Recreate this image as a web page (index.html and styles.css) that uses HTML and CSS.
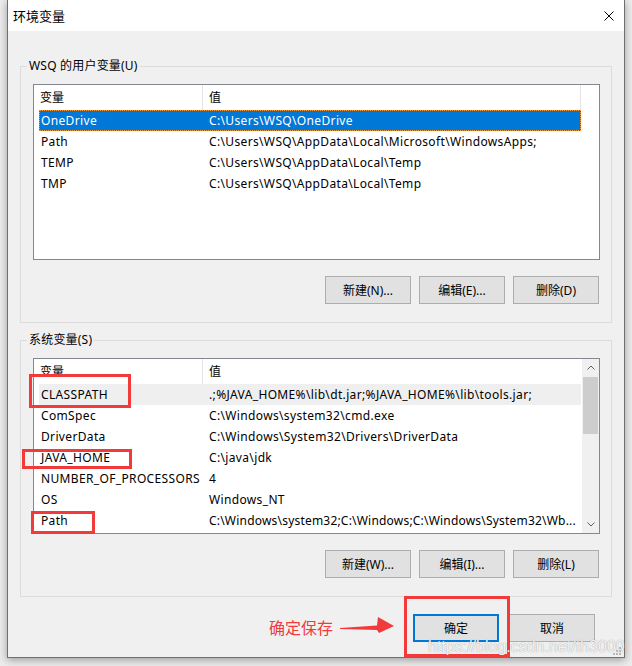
FILE: index.html
```html
<!DOCTYPE html>
<html lang="zh-CN">
<head>
    <meta charset="UTF-8">
    <title>环境变量</title>
    <link rel="stylesheet" href="styles.css">
</head>
<body>
    <div class="window">
        <div class="titlebar">
            <span class="title">环境变量</span>
            <svg class="close" width="10" height="10" viewBox="0 0 10 10">
                <path d="M0.5 0.5 L9.5 9.5 M9.5 0.5 L0.5 9.5" stroke="#000" stroke-width="1" fill="none"/>
            </svg>
        </div>

        <div class="content">
            <div class="group">
                <span class="legend">WSQ 的用户变量(U)</span>
                <div class="list list-user">
                    <div class="list-main">
                        <div class="list-head">
                            <div class="head-name">变量</div>
                            <div class="head-value">值</div>
                            <div class="head-rest"></div>
                        </div>
                        <div class="row selected"><span>OneDrive</span><span>C:\Users\WSQ\OneDrive</span></div>
                        <div class="row"><span>Path</span><span>C:\Users\WSQ\AppData\Local\Microsoft\WindowsApps;</span></div>
                        <div class="row"><span>TEMP</span><span>C:\Users\WSQ\AppData\Local\Temp</span></div>
                        <div class="row"><span>TMP</span><span>C:\Users\WSQ\AppData\Local\Temp</span></div>
                    </div>
                </div>
                <div class="buttons">
                    <button>新建(N)...</button>
                    <button>编辑(E)...</button>
                    <button>删除(D)</button>
                </div>
            </div>

            <div class="group">
                <span class="legend">系统变量(S)</span>
                <div class="list">
                    <div class="list-main">
                        <div class="list-head">
                            <div class="head-name">变量</div>
                            <div class="head-value head-last">值</div>
                        </div>
                        <div class="row soft"><span>CLASSPATH</span><span>.;%JAVA_HOME%\lib\dt.jar;%JAVA_HOME%\lib\tools.jar;</span></div>
                        <div class="row"><span>ComSpec</span><span>C:\Windows\system32\cmd.exe</span></div>
                        <div class="row"><span>DriverData</span><span>C:\Windows\System32\Drivers\DriverData</span></div>
                        <div class="row"><span>JAVA_HOME</span><span>C:\java\jdk</span></div>
                        <div class="row"><span>NUMBER_OF_PROCESSORS</span><span>4</span></div>
                        <div class="row"><span>OS</span><span>Windows_NT</span></div>
                        <div class="row"><span>Path</span><span class="tight">C:\Windows\system32;C:\Windows;C:\Windows\System32\Wb...</span></div>
                    </div>
                    <div class="scrollbar">
                        <div class="sb-btn">
                            <svg width="8" height="5" viewBox="0 0 8 5"><polyline points="0.5,4.5 4,1 7.5,4.5" fill="none" stroke="#606060"/></svg>
                        </div>
                        <div class="sb-thumb"></div>
                        <div class="sb-track"></div>
                        <div class="sb-btn">
                            <svg width="8" height="5" viewBox="0 0 8 5"><polyline points="0.5,0.5 4,4 7.5,0.5" fill="none" stroke="#606060"/></svg>
                        </div>
                    </div>
                </div>
                <div class="buttons">
                    <button>新建(W)...</button>
                    <button>编辑(I)...</button>
                    <button>删除(L)</button>
                </div>
            </div>

            <div class="footer">
                <button class="btn-default">确定</button>
                <button>取消</button>
            </div>
        </div>

        <!-- annotations drawn over the dialog -->
        <div class="mark mark-classpath"></div>
        <div class="mark mark-java"></div>
        <div class="mark mark-path"></div>
        <div class="mark mark-ok"></div>
        <span class="note">确定保存</span>
        <svg class="arrow" width="56" height="18" viewBox="0 0 56 18">
            <polygon points="0,12 37,9.5 38,1 54,10 39,17 37,14 0,13" fill="#f23a3a"/>
        </svg>
        <span class="watermark">https://blog.csdn.net/th3000</span>
        <svg class="grip" width="8" height="8" viewBox="0 0 8 8">
            <rect x="6" y="0" width="2" height="2" fill="#b8b8b8"/>
            <rect x="3" y="3" width="2" height="2" fill="#b8b8b8"/>
            <rect x="6" y="3" width="2" height="2" fill="#b8b8b8"/>
            <rect x="0" y="6" width="2" height="2" fill="#b8b8b8"/>
            <rect x="3" y="6" width="2" height="2" fill="#b8b8b8"/>
            <rect x="6" y="6" width="2" height="2" fill="#b8b8b8"/>
        </svg>
    </div>
</body>
</html>
```

FILE: styles.css
```css
* {
    box-sizing: border-box;
}

body {
    margin: 0;
    width: 632px;
    height: 666px;
    overflow: hidden;
    background: #ececec;
    font-family: "Noto Sans", "Noto Sans CJK SC", sans-serif;
    font-size: 12px;
    color: #000;
}

.window {
    position: relative;
    margin-left: 7px;
    width: 618px;
    height: 658px;
    background: #f0f0f0;
    border: 1px solid #6f6f6f;
    border-top: none;
    box-shadow: 0 2px 8px rgba(0, 0, 0, 0.35);
}

.titlebar {
    height: 31px;
    background: #fff;
    display: flex;
    align-items: center;
    justify-content: space-between;
    padding: 0 10px 0 5px;
}

.title {
    font-size: 13px;
}

.content {
    padding: 35px 12px 0 12px;
}

.group {
    position: relative;
    border: 1px solid #dcdcdc;
    padding: 17px 11px 18px 12px;
}

.group + .group {
    margin-top: 17px;
}

.legend {
    position: absolute;
    top: -9px;
    left: 6px;
    padding: 0 2px;
    line-height: 16px;
    letter-spacing: 0.2px;
    background: #f0f0f0;
}

.list {
    height: 176px;
    border: 1px solid #828790;
    background: #fff;
    display: flex;
}

.list-main {
    flex: 1;
    min-width: 0;
}

.list-head {
    display: flex;
    height: 25px;
    line-height: 25px;
}

.head-name {
    width: 169px;
    padding-left: 6px;
    border-right: 1px solid #e5e5e5;
}

.head-value {
    width: 378px;
    padding-left: 6px;
    border-right: 1px solid #e5e5e5;
}

.head-last {
    width: auto;
    flex: 1;
    border-right: none;
}

.head-rest {
    flex: 1;
}

.row {
    display: grid;
    grid-template-columns: 164px 1fr;
    height: 21px;
    line-height: 21px;
    margin: 0 1px 0 5px;
    white-space: nowrap;
    letter-spacing: 0.35px;
}

.list-user .row {
    margin-right: 18px;
}

.row span {
    overflow: hidden;
}

.row span:first-child {
    padding-left: 2px;
}

.row span:last-child {
    padding-left: 6px;
}

.row .tight {
    letter-spacing: 0.2px;
}

.row.selected {
    background: #0078d7;
    color: #fff;
    outline: 1px dotted #f59b3d;
    outline-offset: -1px;
}

.row.soft {
    background: #efefef;
}

.scrollbar {
    width: 17px;
    background: #f0f0f0;
    display: flex;
    flex-direction: column;
}

.sb-btn {
    height: 17px;
    display: flex;
    align-items: center;
    justify-content: center;
}

.sb-thumb {
    height: 57px;
    margin: 1px 1px 0;
    background: #cdcdcd;
}

.sb-track {
    flex: 1;
}

.buttons {
    display: flex;
    justify-content: flex-end;
    gap: 8px;
    margin-top: 16px;
    padding-right: 1px;
}

button {
    width: 86px;
    height: 28px;
    padding: 0;
    border: 1px solid #adadad;
    background: #e1e1e1;
    font: inherit;
    color: #000;
}

.btn-default {
    border: 2px solid #0078d7;
}

.footer {
    display: flex;
    justify-content: flex-end;
    gap: 10px;
    padding: 17px 17px 0 0;
}

.mark {
    position: absolute;
    border: 3px solid #f23a3a;
}

.mark-classpath {
    left: 21px;
    top: 374px;
    width: 102px;
    height: 34px;
}

.mark-java {
    left: 14px;
    top: 449px;
    width: 110px;
    height: 20px;
}

.mark-path {
    left: 23px;
    top: 511px;
    width: 64px;
    height: 23px;
}

.mark-ok {
    left: 396px;
    top: 596px;
    width: 106px;
    height: 61px;
}

.note {
    position: absolute;
    left: 261px;
    top: 618px;
    font-size: 16px;
    line-height: 20px;
    color: #f23a3a;
}

.arrow {
    position: absolute;
    left: 332px;
    top: 616px;
}

.watermark {
    position: absolute;
    left: 420px;
    top: 637px;
    font-family: "Liberation Sans", sans-serif;
    font-size: 16px;
    line-height: 20px;
    color: rgba(255, 255, 255, 0.9);
    text-shadow: 0 0 1px rgba(110, 110, 110, 0.8);
}

.grip {
    position: absolute;
    right: 3px;
    bottom: 2px;
}
```
